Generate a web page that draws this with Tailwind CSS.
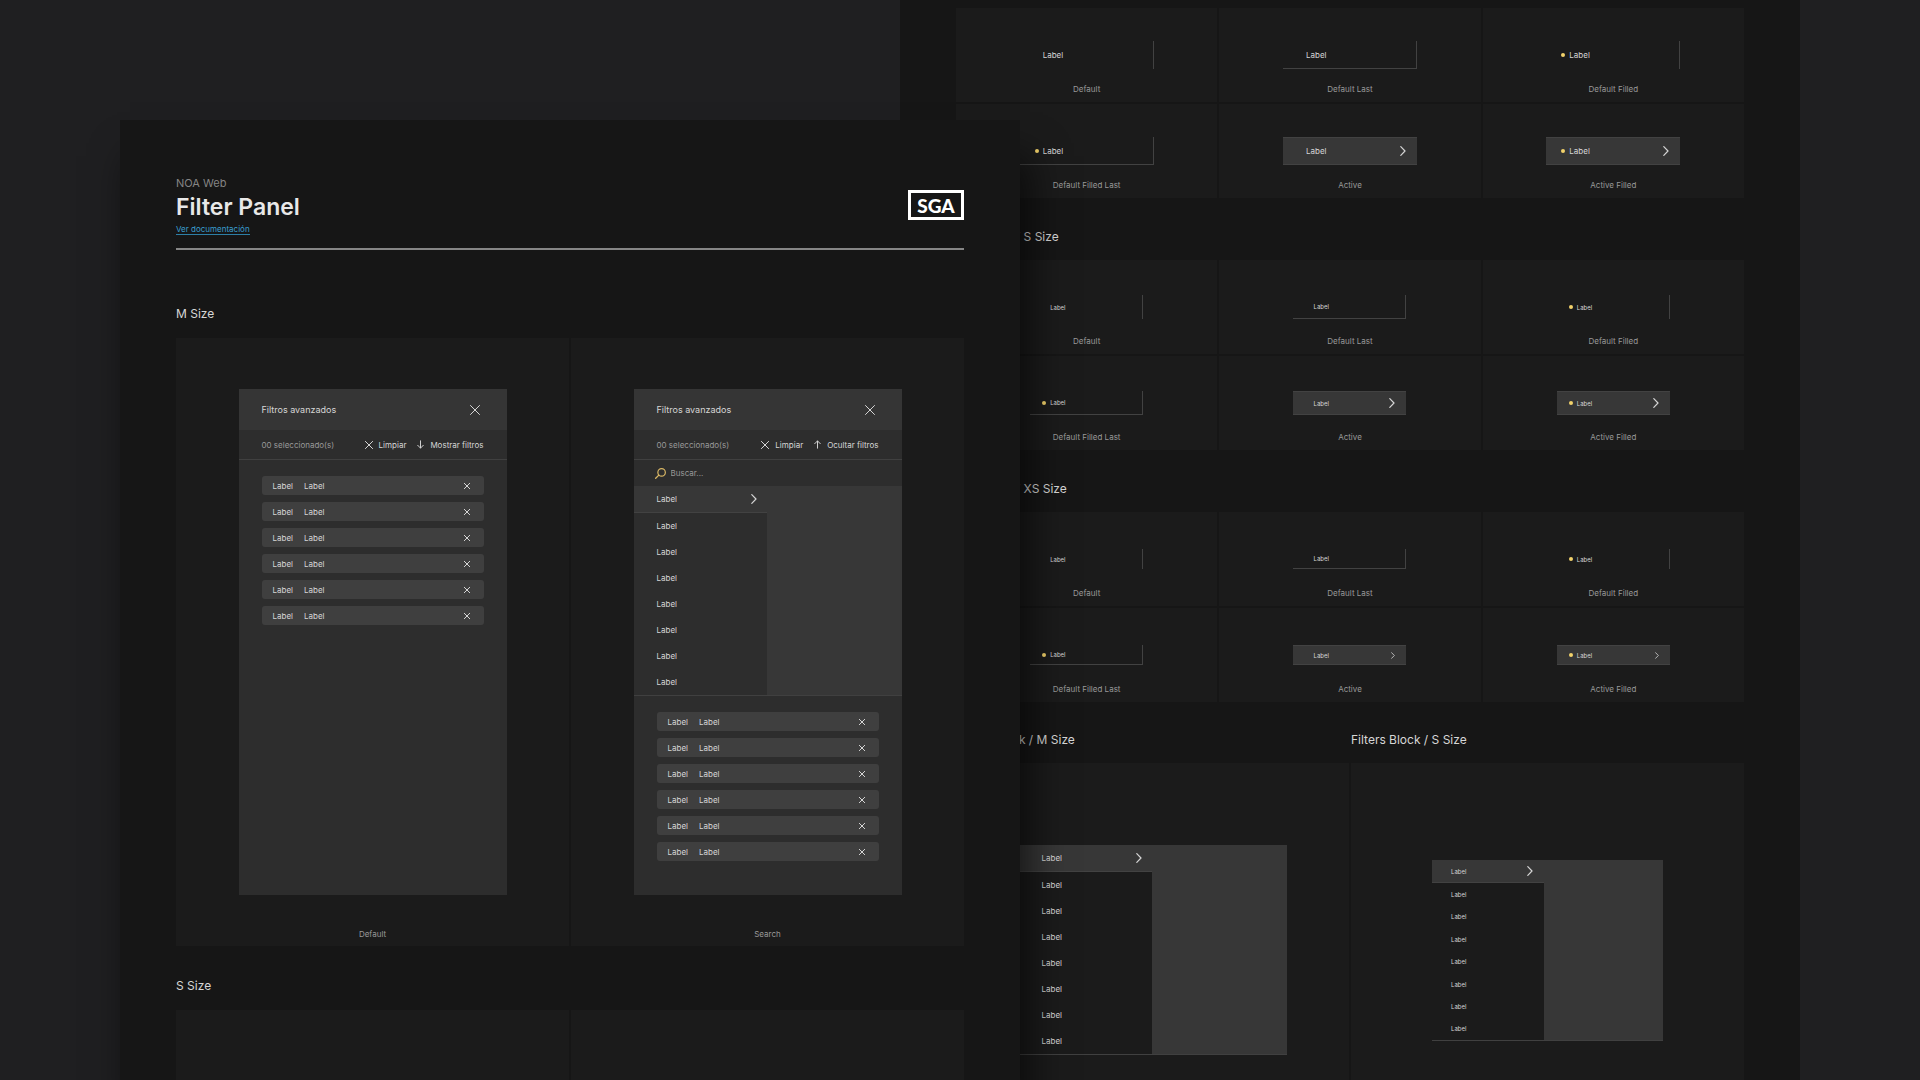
<!DOCTYPE html>
<html lang="es">
<head>
<meta charset="utf-8">
<meta name="viewport" content="width=device-width, initial-scale=1">
<title>NOA Web · Filter Panel</title>
<script src="https://cdn.jsdelivr.net/npm/@tailwindcss/browser@4"></script>
</head>
<body class="bg-[#1f1f21] font-['Inter',sans-serif] text-[#d6d6d6]">

<svg class="hidden" aria-hidden="true">
  <symbol id="i-close" viewBox="0 0 10 10"><path d="M.5 .5 9.5 9.5M9.5 .5 .5 9.5" fill="none" stroke="currentColor" stroke-linecap="round" vector-effect="non-scaling-stroke"/></symbol>
  <symbol id="i-down" viewBox="0 0 8 10"><path d="M4 .8V9M.8 5.9 4 9.1 7.2 5.9" fill="none" stroke="currentColor" stroke-width="1.1" stroke-linecap="round"/></symbol>
  <symbol id="i-up" viewBox="0 0 8 10"><path d="M4 9.2V1M.8 4.1 4 .9 7.2 4.1" fill="none" stroke="currentColor" stroke-width="1.1" stroke-linecap="round"/></symbol>
  <symbol id="i-chevron" viewBox="0 0 6 10"><path d="M.8 .7 5 5 .8 9.3" fill="none" stroke="currentColor" stroke-width="1.2" stroke-linecap="round" stroke-linejoin="round"/></symbol>
  <symbol id="i-search" viewBox="0 0 10 10"><circle cx="6" cy="4" r="3.4" fill="none" stroke="currentColor" stroke-width="1.1"/><path d="M3.5 6.5 .6 9.4" fill="none" stroke="currentColor" stroke-width="1.2" stroke-linecap="round"/></symbol>
</svg>

<div class="flex h-screen overflow-hidden px-[120px]">

  <!-- Filter Panel board -->
  <main class="z-10 mt-[120px] min-w-0 flex-1 bg-[#161616] px-14 pt-[55px] shadow-[10px_36px_36px_rgba(0,0,0,0.6)]">
    <header class="flex items-center justify-between border-b-2 border-[#868686] pb-[13px]">
      <div>
        <p class="text-[11px] leading-4 text-[#858585]">NOA Web</p>
        <h1 class="text-[23px] leading-8 font-semibold text-[#e8e8e8]">Filter Panel</h1>
        <a href="#" class="mt-px block w-fit border-b border-[#2d7fa6] text-[8px] leading-[10px] text-[#3a9fd0]">Ver documentación</a>
      </div>
      <div class="flex h-[30px] w-[56px] items-center justify-center border-[3px] border-white font-['Lato',sans-serif] text-[19px] leading-none font-black text-white">SGA</div>
    </header>

    <section>
      <h2 class="mt-14 mb-4 text-xs leading-4">M Size</h2>
      <div class="grid grid-cols-2 gap-0.5">
        <figure class="flex flex-col items-center bg-[#1b1b1b] pt-[51px] pb-1">
          <div class="h-[506px] w-[268px] bg-[#2d2d2d]">
            <div class="flex h-[41px] items-center justify-between bg-[#353535] pr-[27px] pl-[23px]">
              <h3 class="text-[9px]">Filtros avanzados</h3>
              <button type="button" aria-label="Cerrar"><svg class="size-2.5"><use href="#i-close"/></svg></button>
            </div>
            <div class="flex h-[30px] items-center border-b border-[#404040] px-[23px] text-[8px]">
              <span class="mr-auto text-[#999]">00 seleccionado(s)</span>
              <button type="button" class="flex items-center gap-1"><span class="flex w-3 justify-center"><svg class="size-2"><use href="#i-close"/></svg></span>Limpiar</button>
              <button type="button" class="ml-2 flex items-center gap-1"><span class="flex w-3 justify-center"><svg class="h-[9px] w-[7px]"><use href="#i-down"/></svg></span>Mostrar filtros</button>
            </div>
            <ul data-chips class="flex flex-col gap-[7px] px-[23px] pt-4"></ul>
          </div>
          <figcaption class="mt-[31px] text-[8px] leading-4 text-[#999]">Default</figcaption>
        </figure>

        <figure class="flex flex-col items-center bg-[#1b1b1b] pt-[51px] pb-1">
          <div class="h-[506px] w-[268px] bg-[#2d2d2d]">
            <div class="flex h-[41px] items-center justify-between bg-[#353535] pr-[27px] pl-[23px]">
              <h3 class="text-[9px]">Filtros avanzados</h3>
              <button type="button" aria-label="Cerrar"><svg class="size-2.5"><use href="#i-close"/></svg></button>
            </div>
            <div class="flex h-[30px] items-center border-b border-[#404040] px-[23px] text-[8px]">
              <span class="mr-auto text-[#999]">00 seleccionado(s)</span>
              <button type="button" class="flex items-center gap-1"><span class="flex w-3 justify-center"><svg class="size-2"><use href="#i-close"/></svg></span>Limpiar</button>
              <button type="button" class="ml-2 flex items-center gap-1"><span class="flex w-3 justify-center"><svg class="h-[9px] w-[7px]"><use href="#i-up"/></svg></span>Ocultar filtros</button>
            </div>
            <label class="flex h-[26px] items-center gap-[5px] px-[21px] text-[8px] text-[#d9b765]">
              <svg class="size-[11px]" aria-hidden="true"><use href="#i-search"/></svg>
              <input type="search" aria-label="Buscar" placeholder="Buscar..." class="min-w-0 flex-1 bg-transparent text-[#d6d6d6] outline-none placeholder:text-[#999]">
            </label>
            <div data-block="m"></div>
            <ul data-chips class="flex flex-col gap-[7px] px-[23px] pt-4"></ul>
          </div>
          <figcaption class="mt-[31px] text-[8px] leading-4 text-[#999]">Search</figcaption>
        </figure>
      </div>
    </section>

    <section>
      <h2 class="mt-8 mb-4 text-xs leading-4">S Size</h2>
      <div class="grid grid-cols-2 gap-0.5">
        <div class="h-[500px] bg-[#1b1b1b]"></div>
        <div class="h-[500px] bg-[#1b1b1b]"></div>
      </div>
    </section>
  </main>

  <!-- Filter item states board -->
  <aside class="-ml-[120px] min-w-0 flex-1 bg-[#161616] px-14 pt-2">
    <section data-states="m" class="grid grid-cols-3 gap-0.5"></section>
    <h2 class="mt-[31px] mb-[15px] text-xs leading-4">Filter Item / S Size</h2>
    <section data-states="s" class="grid grid-cols-3 gap-0.5"></section>
    <h2 class="mt-[31px] mb-[15px] text-xs leading-4">Filter Item / XS Size</h2>
    <section data-states="xs" class="grid grid-cols-3 gap-0.5"></section>
    <div class="mt-[30px] grid grid-cols-2 gap-0.5">
      <section>
        <h2 class="mb-[15px] text-xs leading-4">Filters Block / M Size</h2>
        <div class="flex h-[440px] justify-center bg-[#1b1b1b] pt-[82px]"><div data-block="m"></div></div>
      </section>
      <section>
        <h2 class="mb-[15px] text-xs leading-4">Filters Block / S Size</h2>
        <div class="flex h-[440px] justify-center bg-[#1b1b1b] pt-[97px]"><div data-block="s"></div></div>
      </section>
    </div>
  </aside>
</div>

<script>
  // Selected-filter chips
  const chip = `
    <li class="flex h-[19px] items-center rounded-[3px] bg-[#3f3f3f] pr-3.5 pl-[11px] text-[8px]">
      <span>Label</span><span class="ml-[11px]">Label</span>
      <button type="button" aria-label="Quitar filtro" class="ml-auto"><svg class="size-1.5"><use href="#i-close"/></svg></button>
    </li>`;
  document.querySelectorAll('[data-chips]').forEach(el => { el.innerHTML = chip.repeat(6); });

  // Two-pane filter block
  const blocks = {
    m: { box: 'flex h-[210px] w-[268px] border-b border-[#404040] text-[8px]', list: 'flex w-[133px] flex-col', row: 'flex flex-1 items-center pl-[23px] pr-2.5' },
    s: { box: 'flex h-[181px] w-[231px] border-b border-[#404040] text-[6px]', list: 'flex w-[112px] flex-col', row: 'flex flex-1 items-center pl-[19px] pr-[11px]' }
  };
  document.querySelectorAll('[data-block]').forEach(el => {
    const b = blocks[el.dataset.block];
    const active = `<button type="button" class="${b.row} justify-between border-b border-[#424242] bg-[#373737]">Label<svg class="h-[10px] w-[6px]"><use href="#i-chevron"/></svg></button>`;
    const rest = `<button type="button" class="${b.row}">Label</button>`;
    el.innerHTML = `<div class="${b.box}"><div class="${b.list}">${active}${rest.repeat(7)}</div><div class="flex-1 bg-[#373737]"></div></div>`;
  });

  // Item state grids
  const sizes = {
    m: { item: 'flex h-7 w-[134px] items-center pr-[11px] text-[8px]', lead: 'flex w-[23px] justify-end pr-[4px]', icon: 'h-[10px] w-[6px]' },
    s: { item: 'flex h-6 w-[113px] items-center pr-[11px] text-[6px]', lead: 'flex w-[20px] justify-end pr-[4px]', icon: 'h-[10px] w-[6px]' },
    xs: { item: 'flex h-5 w-[113px] items-center pr-[11px] text-[6px]', lead: 'flex w-[20px] justify-end pr-[4px]', icon: 'h-[7px] w-[4px]' }
  };
  const line = 'border-[#424242]';
  const states = [
    ['Default', 'border-r', false, false],
    ['Default Last', 'border-r border-b', false, false],
    ['Default Filled', 'border-r', true, false],
    ['Default Filled Last', 'border-r border-b', true, false],
    ['Active', 'border-y bg-[#373737]', false, true],
    ['Active Filled', 'border-y bg-[#373737]', true, true]
  ];
  document.querySelectorAll('[data-states]').forEach(el => {
    const s = sizes[el.dataset.states];
    el.innerHTML = states.map(([name, look, filled, active]) => `
      <figure class="flex flex-col items-center bg-[#1b1b1b] pt-[33px] pb-[5px]">
        <div class="flex h-7 items-center">
          <button type="button" class="${s.item} ${line} ${look}">
            <span class="${s.lead}">${filled ? '<i class="size-1 rounded-full bg-[#f2d26b]"></i>' : ''}</span>Label
            ${active ? `<svg class="ml-auto ${s.icon}"><use href="#i-chevron"/></svg>` : ''}
          </button>
        </div>
        <figcaption class="mt-3 text-[8px] leading-4 text-[#999]">${name}</figcaption>
      </figure>`).join('');
  });
</script>
</body>
</html>
